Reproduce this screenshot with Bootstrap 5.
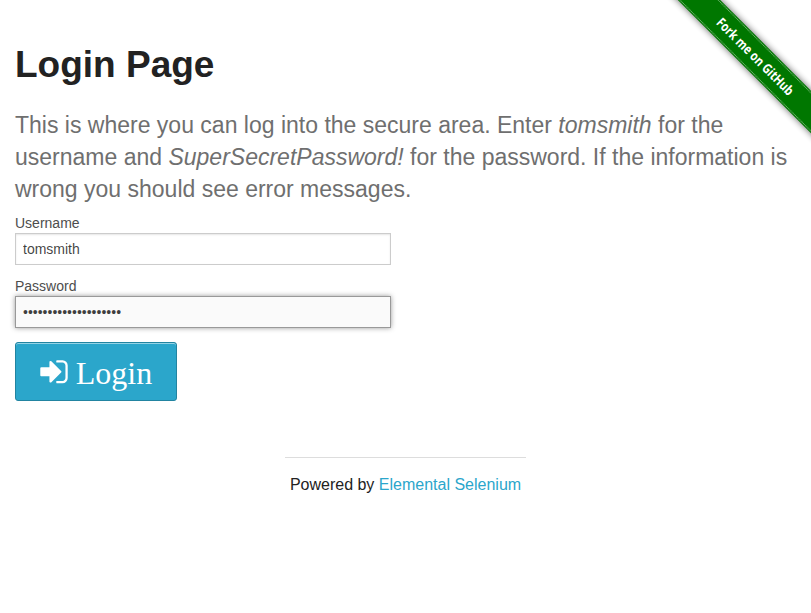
<!DOCTYPE html>
<html lang="en">
<head>
<meta charset="utf-8">
<meta name="viewport" content="width=device-width, initial-scale=1">
<title>Login Page</title>
<link href="https://cdn.jsdelivr.net/npm/bootstrap@5.3.0/dist/css/bootstrap.min.css" rel="stylesheet">
<style>
body{font-family:"Liberation Sans",Arial,sans-serif;color:#222;line-height:24px}
.page{padding:39px 15px 0}
.title{font-size:37px;line-height:52px;font-weight:700;margin:0 0 18px}
.intro{font-size:23px;line-height:32.2px;color:#6f6f6f;font-weight:400;margin:0 0 7px}
.login-form{width:376px}
.login-form .form-label{font-size:14px;line-height:21px;height:20px;color:#4d4d4d;margin:0}
.login-form .form-control{height:32px;padding:7px;font-size:14px;line-height:16px;color:rgba(0,0,0,.75);border:1px solid #ccc;border-radius:0;box-shadow:inset 0 1px 2px rgba(0,0,0,.1);margin-bottom:11px}
.login-form .form-control.active-field{background:#fafafa;border-color:#999;box-shadow:0 0 5px #999;margin-bottom:14px}
.btn-login{width:162px;height:59px;padding:1px 0 0;font:32px/58px "Liberation Serif","Times New Roman",serif;color:#fff;background:#2ba6cb;border:1px solid #2284a1;border-radius:3px;box-shadow:inset 0 1px 0 rgba(255,255,255,.5)}
.btn-login:hover{background:#2284a1;color:#fff}
.btn-login svg{width:28px;height:32px;vertical-align:-5px}
.foot{width:241px;margin:56px auto 0;border-top:1px solid #ddd;padding-top:15px;font-size:16px}
.foot a{color:#2ba6cb}
.ribbon{width:149px;height:149px}
</style>
<script src="https://cdn.jsdelivr.net/npm/bootstrap@5.3.0/dist/js/bootstrap.bundle.min.js"></script>
</head>
<body>
<a href="#" class="ribbon position-absolute top-0 end-0" aria-label="Fork me on GitHub">
<svg class="d-block" width="149" height="149" viewBox="0 0 149 149">
<defs><filter id="soft" x="-20%" y="-50%" width="140%" height="200%"><feGaussianBlur stdDeviation="3.5"/></filter></defs>
<g transform="translate(93 56) rotate(45)">
<rect x="-125" y="-15" width="250" height="30" fill="#000" opacity=".6" filter="url(#soft)"/>
<rect x="-125" y="-15" width="250" height="30" fill="#070"/>
<path d="M-125-13.500H125M-125 13.500H125" stroke="#fff" stroke-opacity=".45" stroke-width="1" stroke-dasharray="1 .6"/>
<text x=".5" y="5" textLength="103" lengthAdjust="spacingAndGlyphs" fill="#fff" font-family="'Open Sans','Noto Sans',sans-serif" font-size="13.500" font-weight="700" text-anchor="middle">Fork me on GitHub</text>
</g>
</svg>
</a>
<main class="page">
<h2 class="title">Login Page</h2>
<h4 class="intro">This is where you can log into the secure area. Enter <em>tomsmith</em> for the username and <em>SuperSecretPassword!</em> for the password. If the information is wrong you should see error messages.</h4>
<form class="login-form">
<label class="form-label d-block" for="username">Username</label>
<input class="form-control" type="text" id="username" value="tomsmith">
<label class="form-label d-block" for="password">Password</label>
<input class="form-control active-field" type="password" id="password" value="SuperSecretPassword!">
<button class="btn btn-login d-block" type="button"><svg viewBox="0 0 1536 1792" fill="currentColor" aria-hidden="true"><path transform="translate(0 -70)" d="M1184 896q0 26-19 45l-544 544q-19 19-45 19t-45-19-19-45v-288h-448q-26 0-45-19t-19-45v-384q0-26 19-45t45-19h448v-288q0-26 19-45t45-19 45 19l544 544q19 19 19 45zm352-352v704q0 119-84.500 203.500t-203.500 84.500h-320q-13 0-22.500-9.500t-9.500-22.500q0-4-1-20t-.5-26.500 3-23.500 10-19.500 20.500-6.500h320q66 0 113-47t47-113v-704q0-66-47-113t-113-47h-312l-11.500-1-11.500-3-8-5.500-7-9-2-13.500q0-4-1-20t-.5-26.500 3-23.500 10-19.500 20.500-6.500h320q119 0 203.500 84.500t84.500 203.500z"/></svg> Login</button>
</form>
<footer class="foot text-center">Powered by <a class="text-decoration-none" href="#">Elemental Selenium</a></footer>
</main>
</body>
</html>
